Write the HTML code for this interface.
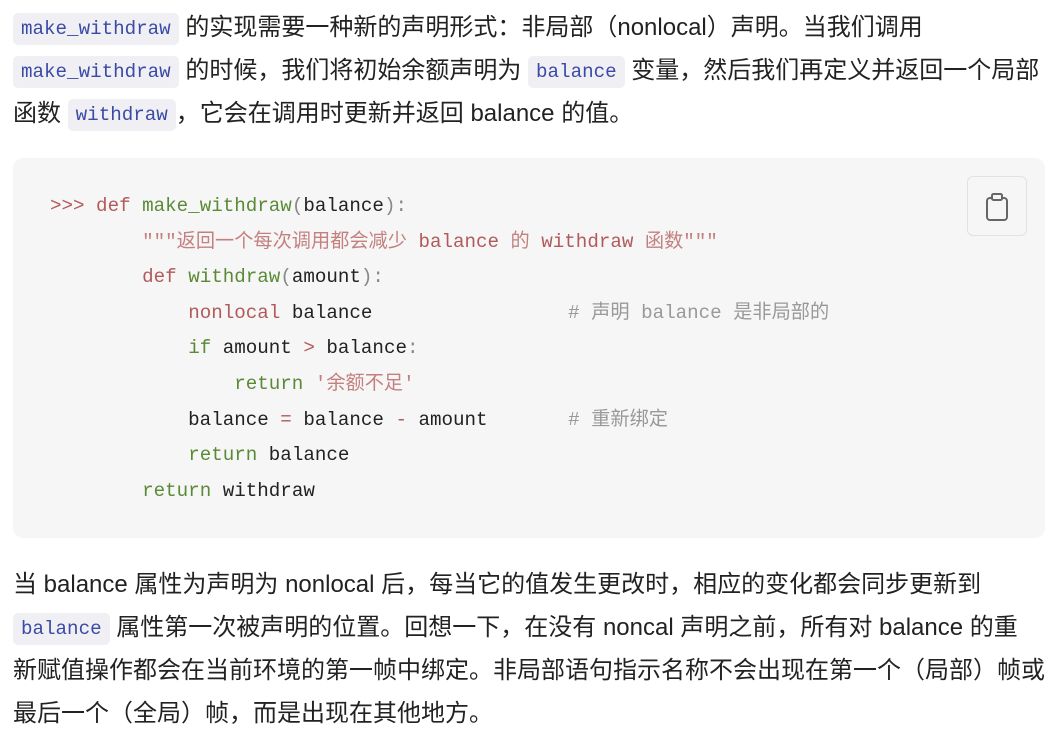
<!DOCTYPE html>
<html><head><meta charset="utf-8"><style>
html,body{margin:0;padding:0;background:#fff;width:1052px;height:730px;overflow:hidden}
body{font-family:"Liberation Sans","Noto Sans CJK SC",sans-serif;font-size:24px;color:#222;}
p{margin:0;position:absolute;left:13px;width:1040px;line-height:43px;white-space:nowrap}
code{display:inline-block;font-family:"Liberation Mono","Noto Sans CJK SC",monospace;font-size:19.2px;line-height:24px;color:#3a4aa6;background:#f0f0f4;border-radius:5px;padding:4px 8px;vertical-align:1px}
.blk{position:absolute;left:13px;top:158px;width:1032px;height:380px;background:#f6f6f7;border-radius:10px}
pre{position:absolute;left:50px;top:189px;margin:0;font-family:"Liberation Mono","Noto Sans CJK SC",monospace;font-size:19.2px;line-height:35.6px;color:#222}
.k{color:#b25a5a}.f{color:#5a8a35}.s{color:#c4807e}.c{color:#999}.p{color:#888}
.btn{position:absolute;left:967px;top:176px;width:58px;height:58px;border:1px solid #e2e2e2;border-radius:6px;background:#f6f6f7}
</style></head><body>
<p style="top:6px"><code>make_withdraw</code> 的实现需要一种新的声明形式：非局部（nonlocal）声明。当我们调用<br><code>make_withdraw</code> 的时候，我们将初始余额声明为 <code>balance</code> 变量，然后我们再定义并返回一个局部<br>函数 <code>withdraw</code>，它会在调用时更新并返回 balance 的值。</p>
<div class="blk"></div>
<pre><span class="k">&gt;&gt;&gt; def</span> <span class="f">make_withdraw</span><span class="p">(</span>balance<span class="p">):</span>
        <span class="s">"""返回一个每次调用都会减少 </span><span class="k">balance</span><span class="s"> 的 </span><span class="k">withdraw</span><span class="s"> 函数"""</span>
        <span class="k">def</span> <span class="f">withdraw</span><span class="p">(</span>amount<span class="p">):</span>
            <span class="k">nonlocal</span> balance                 <span class="c"># 声明 balance 是非局部的</span>
            <span class="f">if</span> amount <span class="k">&gt;</span> balance<span class="p">:</span>
                <span class="f">return</span> <span class="s">'余额不足'</span>
            balance <span class="k">=</span> balance <span class="k">-</span> amount       <span class="c"># 重新绑定</span>
            <span class="f">return</span> balance
        <span class="f">return</span> withdraw</pre>
<div class="btn"><svg width="58" height="58" viewBox="0 0 58 58"><rect x="19" y="21" width="20" height="22" rx="3" fill="none" stroke="#666" stroke-width="2"/><rect x="24" y="17" width="10" height="6" rx="1.5" fill="#f6f6f7" stroke="#666" stroke-width="2"/></svg></div>
<p style="top:563px">当 balance 属性为声明为 nonlocal 后，每当它的值发生更改时，相应的变化都会同步更新到<br><code>balance</code> 属性第一次被声明的位置。回想一下，在没有 noncal 声明之前，所有对 balance 的重<br>新赋值操作都会在当前环境的第一帧中绑定。非局部语句指示名称不会出现在第一个（局部）帧或<br>最后一个（全局）帧，而是出现在其他地方。</p>
</body></html>
